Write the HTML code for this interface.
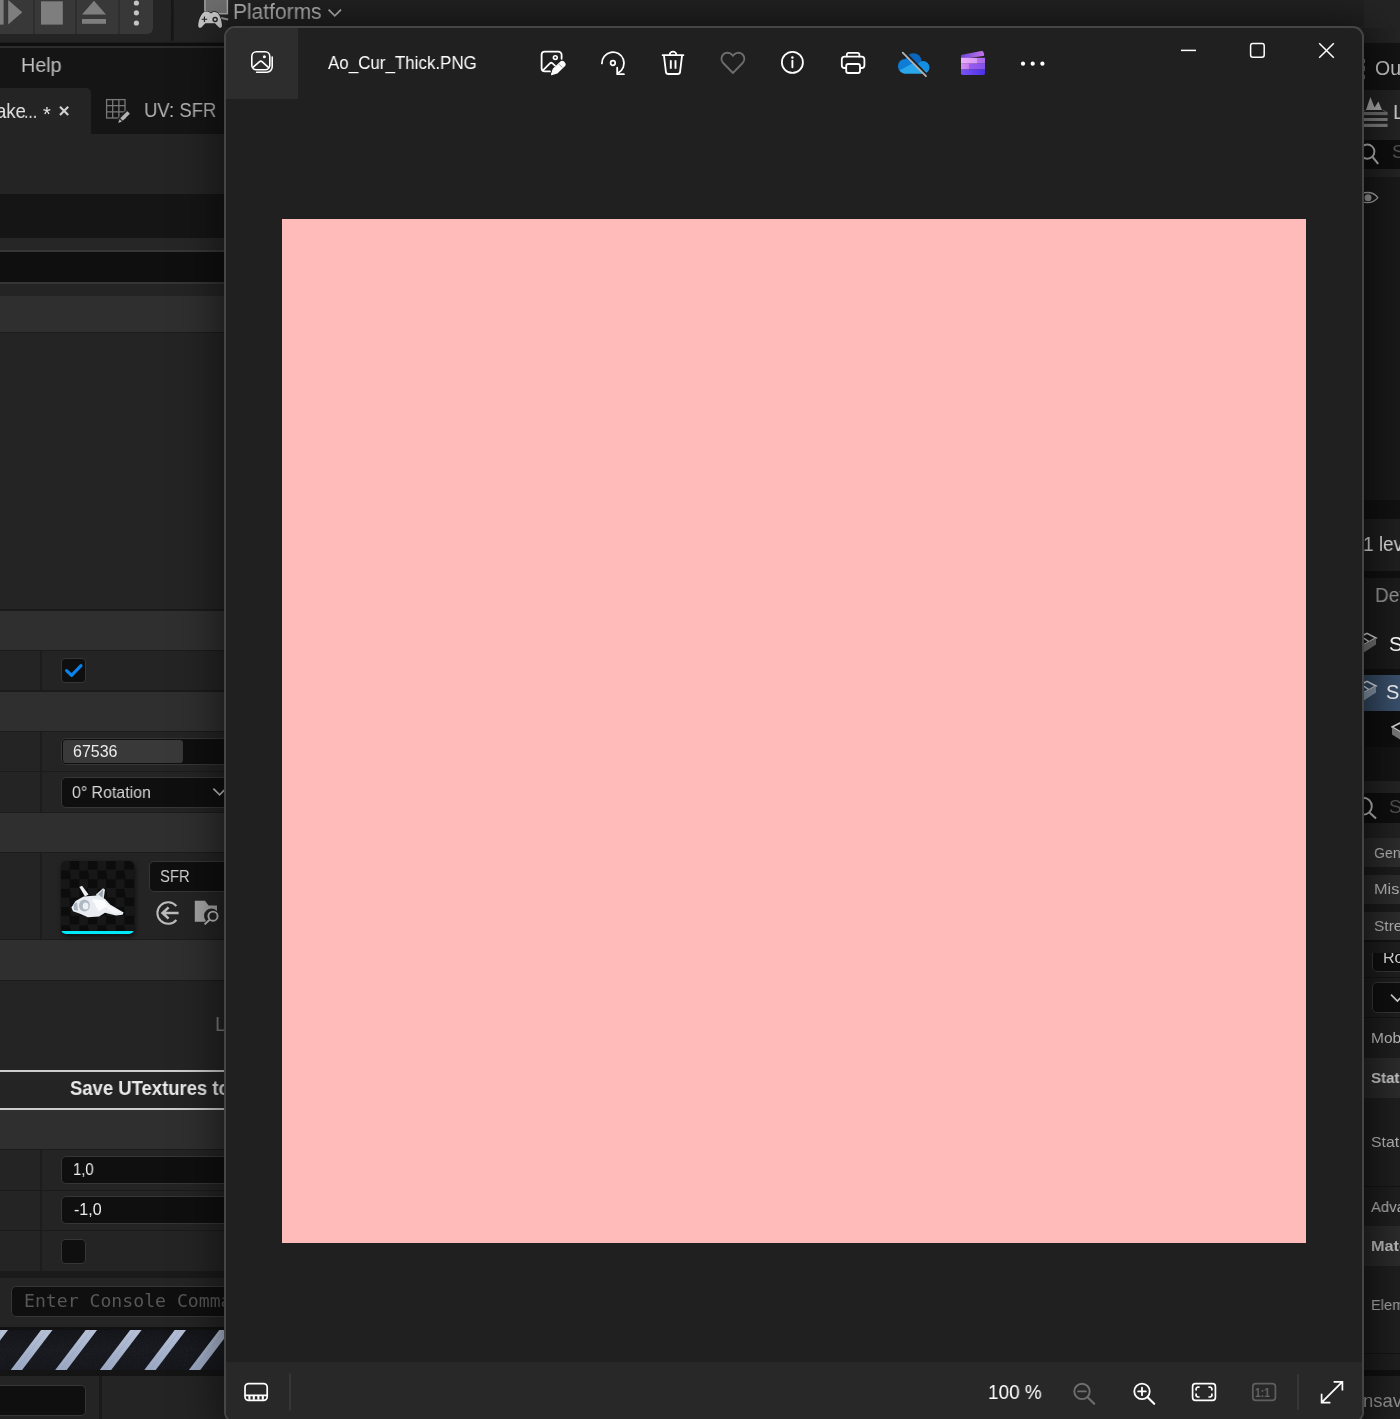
<!DOCTYPE html>
<html lang="en">
<head>
<meta charset="utf-8">
<title>Ao_Cur_Thick.PNG</title>
<style>
html,body{margin:0;padding:0;}
body{width:1400px;height:1419px;overflow:hidden;background:#242424;position:relative;font-family:"Liberation Sans",sans-serif;color:#c0c0c0;}
.a{position:absolute;}
.t{position:absolute;white-space:nowrap;line-height:1;transform-origin:0 0;transform:scaleX(var(--sx,1));will-change:transform;}
#left{left:0;top:0;width:226px;height:1419px;overflow:hidden;background:#242424;}
#right{left:1362px;top:0;width:38px;height:1419px;overflow:hidden;background:#1b1b1b;}
.b{position:absolute;left:0;width:226px;}
.rb{position:absolute;left:0;width:38px;}
.fld{position:absolute;background:#0f0f0f;border:1px solid #363636;border-radius:5px;box-sizing:border-box;}
#win{left:224px;top:26px;width:1140px;height:1397px;box-sizing:border-box;border:2px solid #454545;border-radius:11px;background:#202020;overflow:hidden;box-shadow:0 6px 46px 4px rgba(0,0,0,0.55);}
#win .i{position:absolute;overflow:visible;}
</style>
</head>
<body>

<!-- ================= LEFT: editor panel ================= -->
<div id="left" class="a">
  <!-- toolbar -->
  <div class="b" style="top:0;height:42px;background:#242424"></div>
  <div class="a" style="left:0;top:0;width:153px;height:34px;background:#383838;border-radius:0 0 6px 0"></div>
  <div class="a" style="left:33px;top:0;width:2px;height:34px;background:#2e2e2e"></div>
  <div class="a" style="left:75px;top:0;width:2px;height:34px;background:#2e2e2e"></div>
  <div class="a" style="left:118px;top:0;width:2px;height:34px;background:#2e2e2e"></div>
  <svg class="a" style="left:0;top:0" width="226" height="42" viewBox="0 0 226 42">
    <rect x="0" y="0" width="3.6" height="24.6" fill="#7e7e7e"/>
    <path d="M8.2 0 L8.2 24.6 L22.3 12.3 Z" fill="#7e7e7e"/>
    <rect x="41" y="1.3" width="21.8" height="23.3" fill="#7e7e7e"/>
    <path d="M82 14.5 L94 0.8 L106 14.5 Z" fill="#7e7e7e"/>
    <rect x="82" y="19" width="24" height="4.8" fill="#7e7e7e"/>
    <circle cx="136.4" cy="3" r="2.6" fill="#c4c4c4"/>
    <circle cx="136.4" cy="12.8" r="2.6" fill="#c4c4c4"/>
    <circle cx="136.4" cy="23" r="2.6" fill="#c4c4c4"/>
    <rect x="171" y="0" width="2.6" height="41" fill="#161616"/>
  </svg>
  <div class="b" style="top:42px;height:1px;background:#1b1b1b"></div><div class="b" style="top:43px;height:3px;background:#0f0f0f"></div>
  <div class="b" style="top:46px;height:2px;background:#2c2c2c"></div>
  <!-- menu + tabs -->
  <div class="b" style="top:48px;height:86px;background:#151515"></div>
  <div class="t" id="help" style="--sx:.985;left:20.6px;top:54.8px;font-size:20px;color:#c0c0c0">Help</div>
  <div class="a" style="left:0;top:88px;width:91px;height:46px;background:#242424;border-radius:0 5px 0 0"></div>
  <div class="t" id="tab1" style="--sx:.88;left:-4.4px;top:100px;font-size:21px;color:#e4e4e4">ake</div>
  <div class="t" id="tab1d" style="--sx:.8;left:24.4px;top:101px;font-size:20px;color:#e4e4e4">...</div>
  <div class="t" id="star" style="left:43.4px;top:104px;font-size:20px;color:#e4e4e4">*</div>
  <svg class="a" style="left:58px;top:105px" width="14" height="14" viewBox="0 0 14 14"><path d="M2 1.8 L10.2 10 M10.2 1.8 L2 10" stroke="#d0d0d0" stroke-width="2.2"/></svg>
  <svg class="a" style="left:104px;top:97px" width="30" height="28" viewBox="0 0 30 28">
    <g fill="none" stroke="#787878" stroke-width="1.3">
      <rect x="2.6" y="2.6" width="18.4" height="18.4"/>
      <path d="M8.7 2.6 V21 M14.9 2.6 V21 M2.6 8.7 H21 M2.6 14.9 H21"/>
    </g>
    <path d="M13 22.2 L22.6 12.6 L26 16 L16.4 25.6 Z" fill="#242424"/>
    <path d="M16.3 21.3 L23.3 14.3 L25.8 16.8 L18.8 23.8 Z" fill="#b4b4b4"/>
    <path d="M15.6 22.2 L17.9 24.5 L14.2 25.9 Z" fill="#b4b4b4"/>
  </svg>
  <div class="t" id="uv" style="--sx:.9;left:143.6px;top:100.4px;font-size:20.6px;color:#b4b4b4">UV: SFR</div>

  <div class="b" style="top:194px;height:44px;background:#151515"></div>
  <div class="b" style="top:238px;height:12px;background:#262626"></div>
  <div class="b" style="top:250px;height:2px;background:#373737"></div>
  <div class="b" style="top:252px;height:30px;background:#0f0f0f"></div>
  <div class="b" style="top:282px;height:2px;background:#353535"></div>
  <div class="b" style="top:296px;height:36px;background:#2f2f2f"></div>
  <div class="b" style="top:332px;height:1px;background:#1c1c1c"></div>

  <div class="b" style="top:609px;height:2px;background:#1b1b1b"></div>
  <div class="b" style="top:611px;height:39px;background:#2f2f2f"></div>
  <div class="b" style="top:650px;height:1px;background:#1b1b1b"></div>
  <div class="b" style="top:690px;height:2px;background:#1b1b1b"></div>
  <div class="b" style="top:692px;height:39px;background:#2f2f2f"></div>
  <div class="b" style="top:731px;height:1px;background:#1b1b1b"></div>
  <div class="b" style="top:771px;height:1px;background:#1b1b1b"></div>
  <div class="b" style="top:812px;height:1px;background:#1b1b1b"></div>
  <div class="b" style="top:813px;height:39px;background:#2f2f2f"></div>
  <div class="b" style="top:852px;height:1px;background:#1b1b1b"></div>
  <div class="b" style="top:939px;height:1px;background:#1b1b1b"></div>
  <div class="b" style="top:940px;height:40px;background:#2f2f2f"></div>
  <div class="b" style="top:980px;height:1px;background:#1b1b1b"></div>
  <!-- column dividers -->
  <div class="a" style="left:40px;top:651px;width:2px;height:39px;background:#1c1c1c"></div>
  <div class="a" style="left:40px;top:732px;width:2px;height:80px;background:#1c1c1c"></div>
  <div class="a" style="left:40px;top:853px;width:2px;height:86px;background:#1c1c1c"></div>
  <div class="a" style="left:40px;top:1150px;width:2px;height:121px;background:#1c1c1c"></div>

  <!-- checkbox checked -->
  <div class="fld" style="left:61px;top:658px;width:25px;height:25px;border-radius:4px"></div>
  <svg class="a" style="left:61px;top:658px" width="25" height="25" viewBox="0 0 25 25"><path d="M5.6 12.6 L10.6 17.4 L20 7.6" fill="none" stroke="#0a84ea" stroke-width="3.1" stroke-linecap="round" stroke-linejoin="round"/></svg>
  <!-- number field -->
  <div class="fld" style="left:61px;top:738px;width:200px;height:27px"></div>
  <div class="a" style="left:63px;top:740px;width:120px;height:23px;background:#393939;border-radius:3px"></div>
  <div class="t" id="n1" style="left:73.4px;top:744px;font-size:16px;color:#ececec">67536</div>
  <!-- dropdown -->
  <div class="fld" style="left:61px;top:777px;width:200px;height:31px"></div>
  <div class="t" id="rot" style="--sx:.963;left:72px;top:784px;font-size:16.5px;color:#d6d6d6">0° Rotation</div>
  <svg class="a" style="left:211px;top:786px" width="16" height="12" viewBox="0 0 16 12"><path d="M2.4 2.6 L8.6 8.8 L14.8 2.6" fill="none" stroke="#bdbdbd" stroke-width="1.7"/></svg>

  <!-- thumbnail -->
  <div class="a" style="left:61px;top:861px;width:73px;height:73px;border-radius:5px;overflow:hidden;background-color:#0c0c0c;background-image:conic-gradient(#0c0c0c 25%,#171717 0 50%,#0c0c0c 0 75%,#171717 0);background-size:18.25px 18.25px;box-shadow:1px 2px 5px rgba(0,0,0,0.65)">
    <svg class="a" style="left:0;top:0" width="73" height="73" viewBox="0 0 73 73">
      <defs><filter id="bl" x="-20%" y="-20%" width="140%" height="140%"><feGaussianBlur stdDeviation="0.75"/></filter></defs>
      <g filter="url(#bl)">
        <path d="M18.4 26 L21 24.8 L27.6 33.6 L24 35.4 Z" fill="#eef1f4"/>
        <path d="M35 33.4 L42 27.2 L44 28.4 L42.6 38.4 L36.4 38 Z" fill="#dfe4e9"/>
        <path d="M37.4 33.6 L42 28.6 L41.6 36.8 Z" fill="#9aa5b0"/>
        <path d="M10.4 46.6 L14.6 40 L22.6 35.4 L36 34.6 L44 38 L49.4 43.8 L62.6 51.4 L61.6 53.8 L55 54.4 L44 51.8 L38 55.4 L27 56.2 L18.4 52.4 L12 50.2 Z" fill="#e9edf1"/>
        <path d="M31 38 L43 39.4 L47.4 45 L37.6 50 Z" fill="#fbfcfd"/>
        <ellipse cx="23.4" cy="44.6" rx="5.4" ry="6" fill="#aeb9c4"/>
        <ellipse cx="24.6" cy="45" rx="2.9" ry="3.6" fill="#eef1f4"/>
        <path d="M12.6 43.4 L16 41 L17 49.6 L13 49 Z" fill="#a9b6c1"/>
        <path d="M44.6 46 L49 44 L60 51.4 L52 52.4 Z" fill="#f4f6f8"/>
      </g>
      <rect x="0" y="70" width="73" height="3" fill="#00e9fb"/>
    </svg>
  </div>
  <div class="fld" style="left:149px;top:861px;width:120px;height:31px"></div>
  <div class="t" id="sfr" style="--sx:.9;left:159.6px;top:868px;font-size:16.5px;color:#d0d0d0">SFR</div>
  <svg class="a" style="left:154px;top:899px" width="28" height="28" viewBox="0 0 28 28">
    <path d="M22.4 7 A10.8 10.8 0 1 0 22.4 21" fill="none" stroke="#bcbcbc" stroke-width="2"/>
    <path d="M8.6 14 H24.6 M14.6 8.4 L8.6 14 L14.6 19.6" fill="none" stroke="#bcbcbc" stroke-width="2.6"/>
  </svg>
  <svg class="a" style="left:193px;top:899px" width="28" height="28" viewBox="0 0 28 28">
    <path d="M1.8 1.8 H12 L15.6 6.6 H24 V12 A7.2 7.2 0 0 0 12.8 21.6 L12.4 22.8 H1.8 Z" fill="#a6a6a6"/>
    <circle cx="20" cy="17.2" r="4.6" fill="none" stroke="#bcbcbc" stroke-width="1.9"/>
    <path d="M16.6 20.8 L11.6 25.4" stroke="#bcbcbc" stroke-width="1.9"/>
  </svg>

  <div class="t" id="lbl" style="left:215px;top:1014px;font-size:20px;color:#7c7c7c">Lightmap</div>

  <!-- big button -->
  <div class="b" style="top:1070px;height:1.5px;background:#cdcdcd"></div>
  <div class="b" style="top:1108px;height:1.5px;background:#cdcdcd"></div>
  <div class="t" id="save" style="--sx:.947;left:70px;top:1079px;font-size:19.5px;font-weight:bold;color:#e9e9e9">Save UTextures to disk</div>

  <div class="b" style="top:1110px;height:39px;background:#2f2f2f"></div>
  <div class="b" style="top:1149px;height:1px;background:#1b1b1b"></div>
  <div class="b" style="top:1190px;height:1px;background:#1b1b1b"></div>
  <div class="b" style="top:1230px;height:1px;background:#1b1b1b"></div>
  <div class="fld" style="left:61px;top:1156px;width:200px;height:28px"></div>
  <div class="t" id="v1" style="--sx:.93;left:73px;top:1162px;font-size:16px;color:#ececec">1,0</div>
  <div class="fld" style="left:61px;top:1196px;width:200px;height:28px"></div>
  <div class="t" id="v2" style="left:74px;top:1202px;font-size:16px;color:#ececec">-1,0</div>
  <div class="fld" style="left:61px;top:1239px;width:25px;height:25px;border-radius:4px"></div>

  <div class="b" style="top:1271px;height:7px;background:#1a1a1a"></div>
  <div class="fld" style="left:11px;top:1286px;width:260px;height:31px"></div>
  <div class="t" id="con" style="left:24px;top:1292px;font-size:18.15px;color:#575757;font-family:'DejaVu Sans Mono','Liberation Mono',monospace">Enter Console Command</div>
  <div class="b" style="top:1327px;height:3px;background:#111"></div>
  <svg class="a" style="left:0;top:1330px" width="226" height="40" viewBox="0 0 226 40">
    <defs>
      <linearGradient id="hz" x1="0" y1="0" x2="0" y2="1"><stop offset="0" stop-color="#b6c1d8"/><stop offset="1" stop-color="#9ba8c3"/></linearGradient>
      <linearGradient id="hb" x1="0" y1="0" x2="0" y2="1"><stop offset="0" stop-color="#17191e"/><stop offset="0.5" stop-color="#1d1f26"/><stop offset="1" stop-color="#191b21"/></linearGradient>
      <filter id="nz" x="0" y="0" width="100%" height="100%"><feTurbulence type="fractalNoise" baseFrequency="0.9" numOctaves="2" seed="3"/><feColorMatrix type="matrix" values="0 0 0 0 0  0 0 0 0 0  0 0 0 0 0  0.9 0.9 0.9 0 -0.95"/></filter>
    </defs>
    <rect width="226" height="40" fill="url(#hb)"/>
    <rect width="226" height="40" filter="url(#nz)" opacity="0.3"/>
    <g fill="url(#hz)"><path d="M-33.8 40 L-22.4 40 L8.0 0 L-3.4 0 Z"/><path d="M10.7 40 L22.1 40 L52.5 0 L41.1 0 Z"/><path d="M55.2 40 L66.7 40 L97.1 0 L85.7 0 Z"/><path d="M99.8 40 L111.2 40 L141.6 0 L130.2 0 Z"/><path d="M144.3 40 L155.7 40 L186.1 0 L174.7 0 Z"/><path d="M188.9 40 L200.3 40 L230.7 0 L219.3 0 Z"/><path d="M233.4 40 L244.8 40 L275.2 0 L263.8 0 Z"/></g>
    <g stroke="#8b94ab" stroke-width="0.5" opacity="0.55" fill="none"><path d="M-28.7 40 L1.7 0"/><path d="M15.8 40 L46.2 0"/><path d="M60.4 40 L90.8 0"/><path d="M104.9 40 L135.3 0"/><path d="M149.5 40 L179.9 0"/><path d="M194.0 40 L224.4 0"/><path d="M238.6 40 L269.0 0"/></g>
    
  </svg>
  <div class="b" style="top:1370px;height:6px;background:#141414"></div>
  <div class="fld" style="left:-6px;top:1385px;width:92px;height:31px"></div>
  <div class="a" style="left:99px;top:1376px;width:2.5px;height:43px;background:#1a1a1a"></div>
</div>

<!-- ================= RIGHT: editor strip ================= -->
<div id="right" class="a">
  <div class="rb" style="top:0;height:43px;background:#242424"></div>
  <div class="rb" style="top:43px;height:47px;background:#141414"></div>
  <div class="rb" style="top:90px;height:50px;background:#242424"></div>
  <div class="rb" style="top:140px;height:29px;background:#0f0f0f"></div>
  <div class="rb" style="top:169px;height:8px;background:#242424"></div>
  <div class="rb" style="top:177px;height:342px;background:#1a1a1a"></div>
  <div class="rb" style="top:500px;height:19px;background:#121212"></div>
  <div class="rb" style="top:519px;height:52px;background:#202020"></div>
  <div class="rb" style="top:571px;height:7px;background:#111"></div>
  <div class="rb" style="top:578px;height:91px;background:#1c1c1c"></div>
  <div class="rb" style="top:669px;height:6px;background:#111"></div>
  <div class="rb" style="top:675px;height:36px;background:#3a516d"></div>
  <div class="rb" style="top:711px;height:36px;background:#0f0f0f"></div>
  <div class="rb" style="top:747px;height:34px;background:#151515"></div>
  <div class="rb" style="top:781px;height:12px;background:#242424"></div>
  <div class="rb" style="top:793px;height:30px;background:#0f0f0f"></div>
  <div class="rb" style="top:823px;height:15px;background:#222"></div>
  <div class="rb" style="top:838px;height:29px;background:#2d2d2d"></div>
  <div class="rb" style="top:867px;height:8px;background:#1c1c1c"></div>
  <div class="rb" style="top:875px;height:29px;background:#2d2d2d"></div>
  <div class="rb" style="top:904px;height:8px;background:#1c1c1c"></div>
  <div class="rb" style="top:912px;height:28px;background:#2d2d2d"></div>
  <div class="rb" style="top:940px;height:2px;background:#141414"></div>
  <div class="rb" style="top:942px;height:116px;background:#1f1f1f"></div>
  <div class="rb" style="top:977px;height:1px;background:#151515"></div>
  <div class="rb" style="top:1017px;height:1px;background:#151515"></div>
  <div class="rb" style="top:1058px;height:40px;background:#2c2c2c"></div>
  <div class="rb" style="top:1098px;height:128px;background:#1f1f1f"></div>
  <div class="rb" style="top:1186px;height:1px;background:#151515"></div>
  <div class="rb" style="top:1226px;height:40px;background:#2c2c2c"></div>
  <div class="rb" style="top:1266px;height:104px;background:#1f1f1f"></div>
  <div class="rb" style="top:1353px;height:1px;background:#151515"></div>
  <div class="rb" style="top:1370px;height:6px;background:#111"></div>
  <div class="rb" style="top:1376px;height:43px;background:#212121"></div>

  <div class="a" style="left:0;top:28px;width:38px;height:1391px;background:linear-gradient(90deg,rgba(0,0,0,0.16),rgba(0,0,0,0.08) 45%,rgba(0,0,0,0) 100%)"></div>
  <div class="t" style="left:13px;top:59px;font-size:19.5px;color:#c2c2c2">Outliner</div>
  <svg class="a" style="left:0;top:95px" width="28" height="34" viewBox="1362 95 28 34">
    <path d="M1366 110 L1370.4 97 L1374.5 107.4 L1378.4 101.6 L1382 110 Z" fill="#a9a9a9"/>
    <path d="M1365.6 110 L1360 113 M1382.4 110 L1387.4 112.6" stroke="#5a5a5a" stroke-width="1"/>
    <rect x="1360" y="112" width="27.6" height="3.1" fill="#6c6c6c"/>
    <rect x="1360" y="118" width="27.6" height="3" fill="#7c7c7c"/>
    <rect x="1360" y="123.8" width="27.6" height="3.2" fill="#7c7c7c"/>
  </svg>
  <div class="t" style="left:30.6px;top:102px;font-size:20.5px;color:#c8c8c8">Level</div>
  <svg class="a" style="left:0px;top:140px" width="26" height="28" viewBox="1362 140 26 28"><circle cx="1367.3" cy="151.6" r="7.1" fill="none" stroke="#b0b0b0" stroke-width="1.9"/><path d="M1372.6 157 L1378.2 163.8" stroke="#b0b0b0" stroke-width="2"/></svg>
  <div class="a" style="left:2px;top:58.5px;width:1.4px;height:4.3px;background:#666"></div><div class="a" style="left:2px;top:65.6px;width:1.4px;height:5px;background:#666"></div><div class="a" style="left:2px;top:75px;width:1.4px;height:4.4px;background:#666"></div>
  <div class="t" style="left:30px;top:142.4px;font-size:19px;color:#555">Search</div>
  <svg class="a" style="left:0px;top:188px" width="26" height="20" viewBox="1362 188 26 20"><path d="M1357.6 197.6 C1362 191 1372.6 190.6 1377.8 197.6 C1372.6 204.4 1362 204.2 1357.6 197.6 Z" fill="none" stroke="#a0a0a0" stroke-width="1.3"/><circle cx="1368" cy="197.7" r="3.5" fill="#969696"/></svg>

  <div class="t" style="--sx:.95;left:1px;top:534px;font-size:20px;color:#dcdcdc">1 level</div>
  <div class="t" style="--sx:.95;left:13px;top:585px;font-size:20px;color:#989898">Details</div>
  <svg class="a" style="left:-8px;top:631px" width="24" height="28" viewBox="0 0 24 28"><path d="M1 8.4 L13 2.4 L22 7 L10 13.6 Z" fill="none" stroke="#d0d0d0" stroke-width="1.6"/><path d="M10 13.6 L22 7 L22 13.4 L6 24 L6 18 Z" fill="#6f6f6f"/><path d="M8 6 L14.6 10.4" stroke="#d0d0d0" stroke-width="1.4"/></svg>
  <div class="t" style="left:27px;top:634px;font-size:20.5px;color:#fff">SFR</div>
  <svg class="a" style="left:-8px;top:679px" width="24" height="28" viewBox="0 0 24 28"><path d="M1 8.4 L13 2.4 L22 7 L10 13.6 Z" fill="none" stroke="#d5dae0" stroke-width="1.6"/><path d="M10 13.6 L22 7 L22 13.4 L6 24 L6 18 Z" fill="#8494a6"/><path d="M8 6 L14.6 10.4" stroke="#d5dae0" stroke-width="1.4"/></svg>
  <div class="t" style="left:24px;top:682px;font-size:20px;color:#f2f2f2">SFR</div>
  <svg class="a" style="left:29px;top:719px" width="24" height="26" viewBox="0 0 24 26"><path d="M1 8 L13 2 L22 6.6 L10 13.2 Z" fill="none" stroke="#cfcfcf" stroke-width="1.6"/><path d="M1 8.6 L10 13.6 L10 21 L1 15.6 Z" fill="#777"/></svg>

  <svg class="a" style="left:-10px;top:795px" width="26" height="28" viewBox="0 0 26 28"><circle cx="11.4" cy="11.2" r="8.4" fill="none" stroke="#b4b4b4" stroke-width="1.9"/><path d="M17.4 17.4 L24 23.6" stroke="#b4b4b4" stroke-width="2"/></svg>
  <div class="t" style="left:27px;top:797px;font-size:19px;color:#505050">Search</div>
  <div class="t" style="left:12px;top:845px;--sx:.91;font-size:15.5px;color:#b2b2b2">General</div>
  <div class="t" style="left:12px;top:881px;--sx:1.05;font-size:15.5px;color:#b2b2b2">Misc</div>
  <div class="t" style="left:12px;top:918px;--sx:1;font-size:15.5px;color:#b2b2b2">Streaming</div>
  <div class="a" style="left:10px;top:953px;width:40px;height:19px;overflow:hidden"><div class="fld" style="left:0;top:-12px;width:60px;height:31px"></div><div class="t" style="left:11px;top:-3px;font-size:16px;color:#dcdcdc">Rot</div></div>
  <div class="fld" style="left:10px;top:982px;width:60px;height:31px"></div>
  <svg class="a" style="left:27px;top:992px" width="14" height="12" viewBox="0 0 14 12"><path d="M2 2.6 L8.4 9 L14.8 2.6" fill="none" stroke="#cfcfcf" stroke-width="1.7"/></svg>
  <div class="t" style="left:9px;top:1030px;--sx:1;font-size:15.5px;color:#bababa">Mobility</div>
  <div class="t" style="left:9px;top:1070px;--sx:.975;font-size:15.5px;font-weight:bold;color:#cacaca">Static Mesh</div>
  <div class="t" style="left:9px;top:1134px;--sx:1.02;font-size:15.5px;color:#b4b4b4">Static Mesh</div>
  <div class="t" style="left:9px;top:1199px;--sx:.96;font-size:15.5px;color:#b4b4b4">Advanced</div>
  <div class="t" style="left:9px;top:1238px;--sx:1.05;font-size:15.5px;font-weight:bold;color:#b8b8b8">Materials</div>
  <div class="t" style="left:9px;top:1297px;--sx:.945;font-size:15.5px;color:#a8a8a8">Element 0</div>
  <div class="t" style="left:1px;top:1392px;font-size:18.5px;color:#929292">nsaved</div>
</div>

<div class="t" id="plat" style="--sx:.975;left:233.4px;top:1.5px;font-size:21.5px;color:#c2c2c2">Platforms</div>
<svg class="a" style="left:326px;top:6px" width="18" height="14" viewBox="0 0 18 14"><path d="M2.6 3.6 L8.8 9.8 L15 3.6" fill="none" stroke="#c2c2c2" stroke-width="1.8"/></svg>

<div class="a" style="left:226px;top:0;width:1138px;height:27px;background:linear-gradient(180deg,rgba(0,0,0,0.08),rgba(0,0,0,0.16))"></div>
<svg class="a" style="left:190px;top:0" width="50" height="34" viewBox="190 0 50 34">
  <rect x="204.9" y="-1" width="22.5" height="14.7" fill="#6d6d6d" stroke="#a4a4a4" stroke-width="1.5"/>
  <path d="M221 17.9 L228.2 19.4" stroke="#8c8c8c" stroke-width="2"/>
  <g transform="translate(210 19.6) scale(1.07) translate(-210 -19.3)">
  <path d="M203.5 13.2 C205.5 11.2 208.5 11.6 210 13.2 L211 13.6 C212 12.2 214.6 11.4 216.8 13 C219.4 15 221 21 221.2 24.6 C221.3 27 219.6 27.6 218.2 26.4 L214.6 22.8 L205.6 22.8 L202.2 26.4 C200.8 27.6 198.8 27 199 24.6 C199.2 21 200.8 15.6 203.5 13.2 Z" fill="#c8c8c8" stroke="#1f1f1f" stroke-width="1.3" paint-order="stroke"/>
  <path d="M202.2 19 L207.4 19 M204.8 16.4 L204.8 21.6" stroke="#242424" stroke-width="1.1"/>
  <circle cx="214.8" cy="19.2" r="1.9" fill="none" stroke="#242424" stroke-width="1.3"/>
  </g>
</svg>
<!-- ================= Photos window ================= -->
<div id="win" class="a">
  <div class="a" style="left:0;top:0;width:72px;height:71px;background:#2d2d2d"></div>
  <div class="a" id="pink" style="left:56px;top:191px;width:1024px;height:1024px;background:#ffbaba"></div>
  <div class="a" style="left:0;top:1334px;width:1136px;height:60px;background:#282828"></div>
  <div class="t" id="title" style="--sx:.916;left:102px;top:26.2px;font-size:18.5px;color:#fff">Ao_Cur_Thick.PNG</div>
  <div class="t" id="pct" style="--sx:.92;left:761.6px;top:1354.4px;font-size:20.6px;color:#fff">100 %</div>
  <svg class="a" style="left:0;top:0" width="1136" height="1393" viewBox="226 28 1136 1393" fill="none" stroke="#fff" stroke-width="1.6" stroke-linecap="round" stroke-linejoin="round">
    <!-- app icon -->
    <rect x="251.8" y="51.8" width="18" height="18" rx="4.6"/>
    <path d="M272.2 57 V66.8 A5.4 5.4 0 0 1 266.8 72.2 H256.6"/>
    <circle cx="264.4" cy="56.8" r="1.5" fill="#fff" stroke="none"/>
    <path d="M253.2 67.2 L259.6 61.6 Q260.8 60.6 262 61.6 L268.4 67.4"/>
    <!-- edit image -->
    <g stroke-width="1.8">
    <path d="M561.6 58.8 V54.8 A3.2 3.2 0 0 0 558.4 51.6 H544.8 A3.2 3.2 0 0 0 541.6 54.8 V68.2 A3.2 3.2 0 0 0 544.8 71.4 H550"/>
    <circle cx="555.3" cy="57.6" r="1.9" stroke-width="1.6"/>
    <path d="M543.2 70.2 L549.9 63.3 Q551.2 62.2 552.5 63.3 L555 65.6" stroke-width="1.7"/>
    </g>
    <path d="M551.5 74.6 L553.2 69.2 L560.2 62.4 A2.7 2.7 0 0 1 564.2 66.2 L557 73 Z" fill="#fff" stroke="#fff" stroke-width="1.1"/>
    <path d="M559 64.2 L562.4 67.6" stroke="#202020" stroke-width="0.8" stroke-linecap="butt" opacity="0.55"/>
    <!-- rotate -->
    <g stroke-width="1.8">
    <path d="M601.9 63.4 A11.05 11.05 0 1 1 618.4 72.8"/>
    <path d="M617.2 67.6 V74.2 H623.9"/>
    <circle cx="612.9" cy="63" r="2.3" stroke-width="1.7"/>
    </g>
    <!-- trash -->
    <g stroke-width="1.8">
    <path d="M662.6 55.2 H683.4 M669.6 54.8 A3.4 3.1 0 0 1 676.4 54.8"/>
    <path d="M664 55.8 L665.9 71.6 A2.6 2.6 0 0 0 668.5 74 H677.5 A2.6 2.6 0 0 0 680.1 71.6 L682 55.8"/>
    <path d="M670.8 60.2 V68.8 M675.5 60.2 V68.8" stroke-width="1.9" stroke-linecap="butt"/>
    </g>
    <!-- heart -->
    <path d="M732.9 73 L723.2 63 A6 6 0 0 1 731.7 54.5 L732.9 55.8 L734.1 54.5 A6 6 0 0 1 742.6 63 Z" stroke="#6e6e6e" stroke-width="1.8"/>
    <!-- info -->
    <circle cx="792.4" cy="62.4" r="10.5" stroke-width="1.8"/>
    <circle cx="792.4" cy="57.5" r="1.25" fill="#fff" stroke="none"/>
    <path d="M792.4 60.8 V67.2" stroke-width="1.9"/>
    <!-- printer -->
    <g stroke-width="1.8">
    <path d="M846.8 56.4 V54.8 A2 2 0 0 1 848.8 52.8 H857.4 A2 2 0 0 1 859.4 54.8 V56.4"/>
    <path d="M846 68 H844.6 A2.8 2.8 0 0 1 841.8 65.2 V59.4 A2.8 2.8 0 0 1 844.6 56.6 H861.6 A2.8 2.8 0 0 1 864.4 59.4 V65.2 A2.8 2.8 0 0 1 861.6 68 H860.4"/>
    <rect x="846.2" y="64" width="13.8" height="9" rx="2"/>
    </g>
    <!-- onedrive -->
    <g stroke="none">
      <circle cx="913.4" cy="61.4" r="8.2" fill="#0b66be"/>
      <circle cx="923.2" cy="67.4" r="6.3" fill="#168ee0"/>
      <circle cx="905.2" cy="66.2" r="7.3" fill="#0f7cd6"/>
      <path d="M899.4 70.6 L912.4 63.6 L927.6 71.4 A6.3 6.3 0 0 1 923.2 73.7 H905.2 A7.3 7.3 0 0 1 899.4 70.6 Z" fill="#2aa6ea"/>
      <rect x="903" y="66" width="22" height="7.7" fill="#2aa6ea" opacity="0"/>
    </g>
    <path d="M904.2 52 L927.4 75.6" stroke="#202020" stroke-width="2.6" stroke-linecap="butt"/>
    <path d="M902.7 52.6 L926 76.2" stroke="#b4b4b4" stroke-width="1.8"/>
    <!-- clipchamp -->
    <defs>
      <linearGradient id="cf" x1="0" y1="0" x2="1" y2="0"><stop offset="0" stop-color="#6a46d6"/><stop offset="1" stop-color="#c674ea"/></linearGradient>
      <linearGradient id="c1" x1="0" y1="0" x2="1" y2="0"><stop offset="0" stop-color="#eaaefc"/><stop offset="0.66" stop-color="#d996f6"/><stop offset="0.67" stop-color="#b672f0"/><stop offset="1" stop-color="#a866ee"/></linearGradient>
      <linearGradient id="c2" x1="0" y1="0" x2="1" y2="0"><stop offset="0" stop-color="#d48cf4"/><stop offset="0.33" stop-color="#c27cf0"/><stop offset="0.34" stop-color="#9a5cee"/><stop offset="1" stop-color="#8450ec"/></linearGradient>
      <linearGradient id="c3" x1="0" y1="0" x2="1" y2="0"><stop offset="0" stop-color="#7a54f2"/><stop offset="1" stop-color="#4c30e8"/></linearGradient>
      <clipPath id="cb"><path d="M961 57.6 H985 V73.2 A1.8 1.8 0 0 1 983.2 75 H962.8 A1.8 1.8 0 0 1 961 73.2 Z"/></clipPath>
    </defs>
    <g stroke="none">
      <path d="M961 56 Q961 55 962 54.8 L981.4 51 Q983.2 50.8 983.6 52.4 L984.2 54.8 Q984.4 55.8 983.2 56 L961 59 Z" fill="url(#cf)"/>
      <g clip-path="url(#cb)">
        <rect x="961" y="57.6" width="24" height="6.1" fill="url(#c1)"/>
        <rect x="961" y="63.6" width="24" height="6" fill="url(#c2)"/>
        <rect x="961" y="69.5" width="24" height="5.6" fill="url(#c3)"/>
      </g>
    </g>
    <!-- more -->
    <g fill="#fff" stroke="none"><circle cx="1023" cy="63.7" r="2.1"/><circle cx="1032.7" cy="63.7" r="2.1"/><circle cx="1042.4" cy="63.7" r="2.1"/></g>
    <!-- window controls -->
    <path d="M1181 50.4 H1196" stroke-width="1.5" stroke-linecap="butt"/>
    <rect x="1250.6" y="43.6" width="13.6" height="13.6" rx="2.2" stroke-width="1.5"/>
    <path d="M1319.2 43.2 L1333.8 57.8 M1333.8 43.2 L1319.2 57.8" stroke-width="1.5" stroke-linecap="butt"/>

    <!-- bottom bar -->
    <rect x="245" y="1383.6" width="22.2" height="16.8" rx="3.6" stroke-width="1.7"/>
    <path d="M245.6 1395.4 H266.8" stroke-width="1.7"/>
    <path d="M249.4 1395.6 V1399.8 M253.8 1395.6 V1399.8 M258.4 1395.6 V1399.8 M262.8 1395.6 V1399.8" stroke-width="2.1" stroke-linecap="butt"/>
    <path d="M290 1374 V1410" stroke="#3d3d3d" stroke-width="1.4"/>
    <g stroke="#6e6e6e" stroke-width="1.9"><circle cx="1082" cy="1391.4" r="7.7"/><path d="M1078.2 1391.4 H1085.8"/><path d="M1087.6 1397.2 L1094.2 1403.8" stroke-width="2.2"/></g>
    <g stroke-width="1.8"><circle cx="1142" cy="1391.4" r="7.7"/><path d="M1138.2 1391.4 H1145.8 M1142 1387.6 V1395.2"/><path d="M1147.6 1397.2 L1154.2 1403.8" stroke-width="2.1"/></g>
    <rect x="1192.6" y="1383.6" width="22.8" height="16.8" rx="2.8" stroke-width="1.7"/>
    <path d="M1196.1 1390.6 V1389 A1.8 1.8 0 0 1 1197.9 1387.2 H1199.6 M1208.4 1387.2 H1210.1 A1.8 1.8 0 0 1 1211.9 1389 V1390.6 M1211.9 1393.6 V1395.2 A1.8 1.8 0 0 1 1210.1 1397 H1208.4 M1199.6 1397 H1197.9 A1.8 1.8 0 0 1 1196.1 1395.2 V1393.6" stroke-width="1.7" stroke-linecap="butt"/>
    <rect x="1252.8" y="1383.6" width="22.6" height="16.8" rx="3.2" stroke="#5f5f5f" stroke-width="1.7"/>
    <path d="M1298 1374.6 V1409.4" stroke="#3d3d3d" stroke-width="1.4"/>
    <path d="M1322 1402.2 L1342 1382.2 M1333.6 1381.8 H1342.4 V1390.6 M1321.6 1393.8 V1402.6 H1330.4" stroke-width="1.7" stroke-linecap="butt" stroke-linejoin="miter"/>
  </svg>
  <div class="t" id="oneone" style="--sx:.8;left:1029.4px;top:1357.6px;font-size:13px;font-weight:bold;color:#666">1:1</div>
</div>


</body>
</html>
